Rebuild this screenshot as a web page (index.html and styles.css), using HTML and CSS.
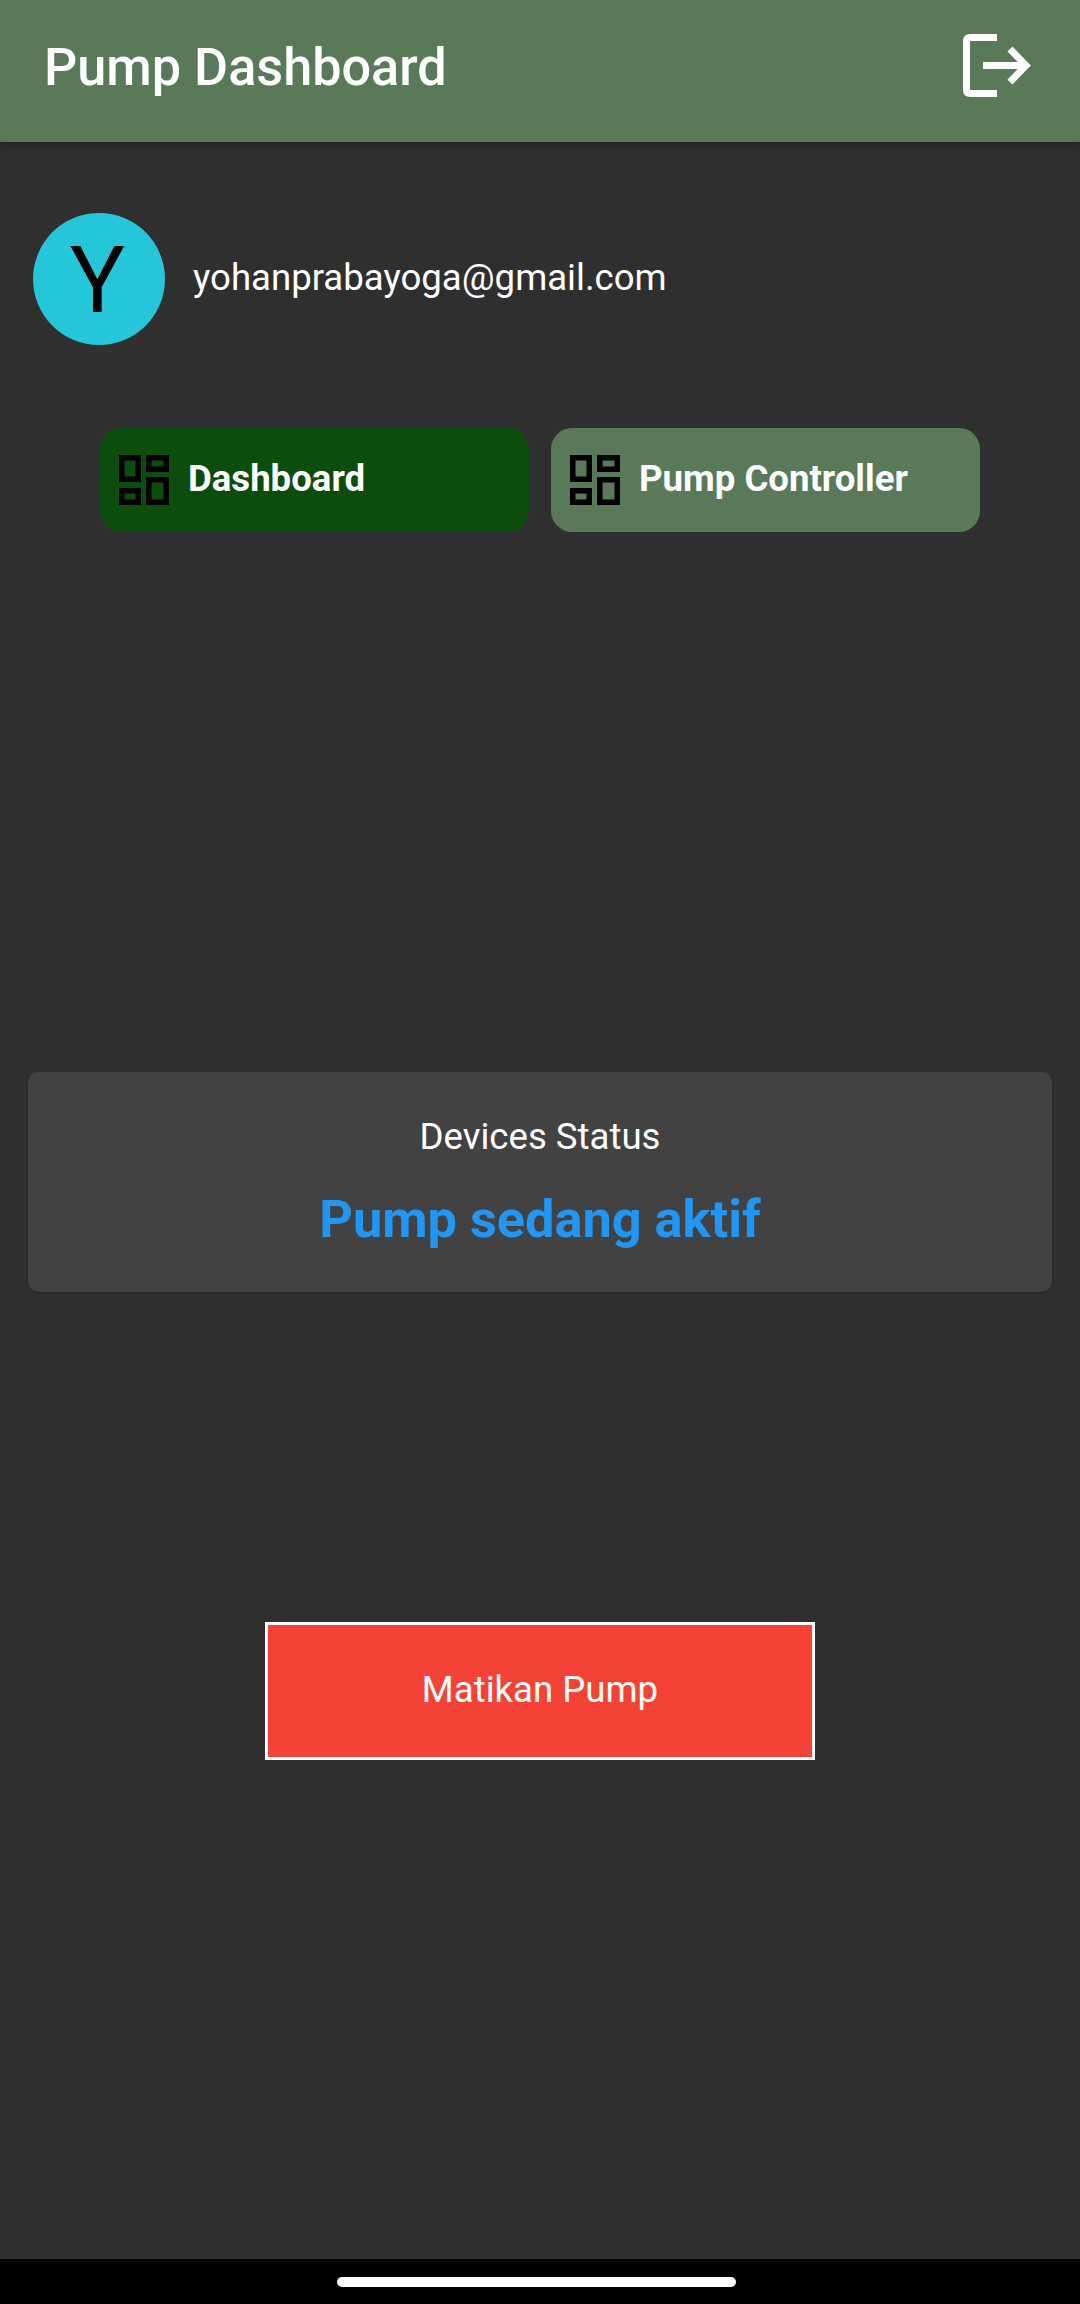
FILE: index.html
```html
<!DOCTYPE html>
<html lang="id">
<head>
<meta charset="utf-8">
<title>Pump Dashboard</title>
<link rel="stylesheet" href="styles.css">
</head>
<body>
<div class="screen">
  <header class="appbar">
    <h1 class="appbar-title">Pump Dashboard</h1>
    <svg class="logout" viewBox="0 0 69 63" aria-hidden="true">
      <path d="M34 3.500H7Q3.500 3.500 3.500 7V56Q3.500 59.500 7 59.500H34" class="logout-stroke"/>
      <path d="M20 31.500H63M47 15L63 31.500L47 48" class="logout-stroke"/>
    </svg>
  </header>
  <main class="content">
    <section class="user">
      <div class="avatar">Y</div>
      <div class="email">yohanprabayoga@gmail.com</div>
    </section>
    <nav class="tabs">
      <a class="tab tab-active">
        <svg class="tab-icon" viewBox="0 0 50 50" aria-hidden="true"><path d="M2.750 2.750H19.250V24.250H2.750ZM29.750 2.750H47.250V14.250H29.750ZM29.750 24.750H47.250V47.250H29.750ZM2.750 35.750H19.250V47.250H2.750Z"/></svg>
        <span>Dashboard</span>
      </a>
      <a class="tab">
        <svg class="tab-icon" viewBox="0 0 50 50" aria-hidden="true"><path d="M2.750 2.750H19.250V24.250H2.750ZM29.750 2.750H47.250V14.250H29.750ZM29.750 24.750H47.250V47.250H29.750ZM2.750 35.750H19.250V47.250H2.750Z"/></svg>
        <span>Pump Controller</span>
      </a>
    </nav>
    <section class="status">
      <div class="status-label">Devices Status</div>
      <div class="status-value">Pump sedang aktif</div>
    </section>
    <button class="action">Matikan Pump</button>
  </main>
  <footer class="navbar"><div class="pill"></div></footer>
</div>
</body>
</html>
```
FILE: styles.css
```css
* { box-sizing: border-box; }
html, body { margin: 0; padding: 0; }
body { background: #2f2f2f; font-family: Roboto, "Noto Sans", sans-serif; color: #fff; }
.screen { width: 1080px; height: 2304px; display: flex; flex-direction: column; background: #2f2f2f; }
.appbar { height: 142px; flex: none; display: flex; align-items: center; justify-content: space-between; padding: 0 48px 11px 44px; background: #597959; box-shadow: 0 2px 6px rgba(0,0,0,.35); }
.appbar-title { margin: 6px 0 0; font-size: 52.200px; font-weight: 500; line-height: 1; }
.logout { width: 69px; height: 63px; }
.logout-stroke { fill: none; stroke: #fff; stroke-width: 7; }
.content { flex: 1; display: flex; flex-direction: column; align-items: center; }
.user { align-self: stretch; display: flex; align-items: flex-start; gap: 28px; padding: 71px 33px 0; height: 286px; }
.avatar { width: 132px; height: 132px; flex: none; border-radius: 50%; background: #26c6da; color: #000; font-size: 92px; padding: 3px 3px 0 0; display: flex; align-items: center; justify-content: center; }
.email { font-size: 36.600px; line-height: 42px; margin-top: 44px; }
.tabs { display: flex; gap: 22px; }
.tab { width: 429px; height: 104px; border-radius: 21px; background: #597959; display: flex; align-items: center; gap: 19px; padding: 0 0 3px 19px; font-size: 36.600px; font-weight: 700; }
.tab-active { background: #0c4c0c; }
.tab-icon { width: 50px; height: 50px; flex: none; margin-top: 3px; }
.tab-icon path { fill: none; stroke: #000; stroke-width: 5.500; }
.status { width: 1024px; height: 220px; margin-top: 540px; background: #424242; border-radius: 10px; display: flex; flex-direction: column; align-items: center; padding-top: 44px; box-shadow: 0 1px 2px rgba(0,0,0,.3); }
.status-label { font-size: 36.600px; line-height: 42px; }
.status-value { font-size: 52.300px; line-height: 62px; font-weight: 700; color: #2196f3; margin-top: 30px; }
.action { width: 550px; height: 138px; margin-top: 330px; background: #f44336; color: #fff; border: 3px solid #fff; border-radius: 0; font-family: inherit; font-size: 36.600px; padding: 0 0 3px; }
.navbar { height: 45px; flex: none; background: #000; display: flex; justify-content: center; padding: 18px 7px 0 0; }
.pill { width: 399px; height: 10px; border-radius: 5px; background: #fff; }
```
